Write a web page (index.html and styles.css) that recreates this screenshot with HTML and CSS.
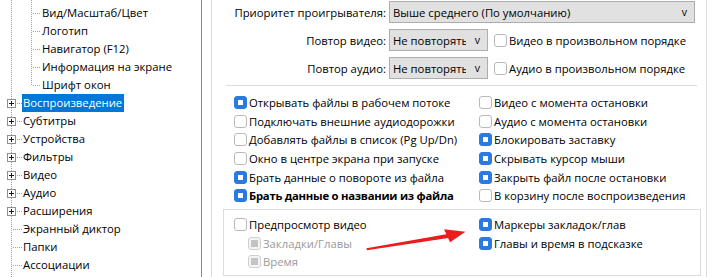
FILE: index.html
```html
<!DOCTYPE html>
<html lang="ru">
<head>
<meta charset="utf-8">
<link rel="stylesheet" href="styles.css">
</head>
<body>
<div class="root">
  <div class="tree">
    <div class="children">
      <div class="row child"><span class="lbl">Вид/Масштаб/Цвет</span></div>
      <div class="row child"><span class="lbl">Логотип</span></div>
      <div class="row child"><span class="lbl">Навигатор (F12)</span></div>
      <div class="row child"><span class="lbl">Информация на экране</span></div>
      <div class="row child"><span class="lbl">Шрифт окон</span></div>
    </div>
    <div class="row node"><span class="ind"><svg class="plus" width="9" height="9" viewBox="0 0 9 9"><rect x="0.5" y="0.5" width="8" height="8" fill="#fff" stroke="#8f8f8f"/><path d="M2 4.5H7M4.5 2V7" stroke="#1a1a1a"/></svg></span><span class="lbl sel">Воспроизведение</span></div>
    <div class="row node"><span class="ind"><svg class="plus" width="9" height="9" viewBox="0 0 9 9"><rect x="0.5" y="0.5" width="8" height="8" fill="#fff" stroke="#8f8f8f"/><path d="M2 4.5H7M4.5 2V7" stroke="#1a1a1a"/></svg></span><span class="lbl">Субтитры</span></div>
    <div class="row node"><span class="ind"><svg class="plus" width="9" height="9" viewBox="0 0 9 9"><rect x="0.5" y="0.5" width="8" height="8" fill="#fff" stroke="#8f8f8f"/><path d="M2 4.5H7M4.5 2V7" stroke="#1a1a1a"/></svg></span><span class="lbl">Устройства</span></div>
    <div class="row node"><span class="ind"><svg class="plus" width="9" height="9" viewBox="0 0 9 9"><rect x="0.5" y="0.5" width="8" height="8" fill="#fff" stroke="#8f8f8f"/><path d="M2 4.5H7M4.5 2V7" stroke="#1a1a1a"/></svg></span><span class="lbl">Фильтры</span></div>
    <div class="row node"><span class="ind"><svg class="plus" width="9" height="9" viewBox="0 0 9 9"><rect x="0.5" y="0.5" width="8" height="8" fill="#fff" stroke="#8f8f8f"/><path d="M2 4.5H7M4.5 2V7" stroke="#1a1a1a"/></svg></span><span class="lbl">Видео</span></div>
    <div class="row node"><span class="ind"><svg class="plus" width="9" height="9" viewBox="0 0 9 9"><rect x="0.5" y="0.5" width="8" height="8" fill="#fff" stroke="#8f8f8f"/><path d="M2 4.5H7M4.5 2V7" stroke="#1a1a1a"/></svg></span><span class="lbl">Аудио</span></div>
    <div class="row node"><span class="ind"><svg class="plus" width="9" height="9" viewBox="0 0 9 9"><rect x="0.5" y="0.5" width="8" height="8" fill="#fff" stroke="#8f8f8f"/><path d="M2 4.5H7M4.5 2V7" stroke="#1a1a1a"/></svg></span><span class="lbl">Расширения</span></div>
    <div class="row leaf"><span class="ind"></span><span class="lbl">Экранный диктор</span></div>
    <div class="row leaf"><span class="ind"></span><span class="lbl">Папки</span></div>
    <div class="row leaf"><span class="ind"></span><span class="lbl">Ассоциации</span></div>
  </div>

  <div class="pane">
    <div class="form">
      <div class="flabel">Приоритет проигрывателя:</div>
      <div class="dd wide"><span class="t">Выше среднего (По умолчанию)</span><span class="v">v</span></div>

      <div class="flabel">Повтор видео:</div>
      <div class="dd"><span class="t">Не повторять</span><span class="v">v</span></div>
      <div class="cb fcb"><span class="box"></span><span>Видео в произвольном порядке</span></div>

      <div class="flabel">Повтор аудио:</div>
      <div class="dd"><span class="t">Не повторять</span><span class="v">v</span></div>
      <div class="cb fcb"><span class="box"></span><span>Аудио в произвольном порядке</span></div>
    </div>

    <div class="sep"></div>

    <div class="checks">
      <div class="cb"><span class="box on"></span><span>Открывать файлы в рабочем потоке</span></div>
      <div class="cb"><span class="box"></span><span>Видео с момента остановки</span></div>
      <div class="cb"><span class="box"></span><span>Подключать внешние аудиодорожки</span></div>
      <div class="cb"><span class="box"></span><span>Аудио с момента остановки</span></div>
      <div class="cb"><span class="box"></span><span>Добавлять файлы в список (Pg Up/Dn)</span></div>
      <div class="cb"><span class="box on"></span><span>Блокировать заставку</span></div>
      <div class="cb"><span class="box"></span><span>Окно в центре экрана при запуске</span></div>
      <div class="cb"><span class="box on"></span><span>Скрывать курсор мыши</span></div>
      <div class="cb"><span class="box on"></span><span>Брать данные о повороте из файла</span></div>
      <div class="cb"><span class="box on"></span><span>Закрыть файл после остановки</span></div>
      <div class="cb bold"><span class="box on"></span><span>Брать данные о названии из файла</span></div>
      <div class="cb"><span class="box"></span><span>В корзину после воспроизведения</span></div>
    </div>

    <div class="group">
      <div class="cb"><span class="box"></span><span>Предпросмотр видео</span></div>
      <div class="cb"><span class="box on"></span><span>Маркеры закладок/глав</span></div>
      <div class="cb sub dis"><span class="box"></span><span>Закладки/Главы</span></div>
      <div class="cb"><span class="box on"></span><span>Главы и время в подсказке</span></div>
      <div class="cb sub dis"><span class="box"></span><span>Время</span></div>
    </div>
  </div>

  <svg class="arrow" width="721" height="277" viewBox="0 0 721 277">
    <polygon points="366.5,248.3 447.7,234 448.3,238 366.9,250.3" fill="#ea1c1c"/>
    <polygon points="465.5,231.7 444,229.3 450,242.3" fill="#ea1c1c"/>
  </svg>
</div>
</body>
</html>
```

FILE: styles.css
```css
* { box-sizing: border-box; }
html, body { margin: 0; padding: 0; background: #fff; }
body {
  font-family: "Open Sans", "Noto Sans", sans-serif;
  font-size: 11.3px;
  color: #000;
  width: 721px;
  height: 277px;
  overflow: hidden;
}
.root {
  position: relative;
  display: flex;
  height: 277px;
}

/* ---------- tree ---------- */
.tree {
  width: 202px;
  flex: none;
  border-right: 1px solid #828790;
  background: repeating-linear-gradient(to bottom, #a0a0a0 0 1px, transparent 1px 2px) 11px 0 / 1px 100% no-repeat;
}
.children {
  padding-top: 4px;
  background: repeating-linear-gradient(to bottom, #a0a0a0 0 1px, transparent 1px 2px) 31px 0 / 1px calc(100% - 9px) no-repeat;
}
.row {
  display: flex;
  height: 18px;
  line-height: 18px;
  white-space: nowrap;
}
.row.child {
  padding-left: 42px;
  background: repeating-linear-gradient(to right, #a0a0a0 0 1px, transparent 1px 2px) 33px 9px / 8px 1px no-repeat;
}
.row.node {
  background: repeating-linear-gradient(to right, #a0a0a0 0 1px, transparent 1px 2px) 17px 9px / 5px 1px no-repeat;
}
.row.leaf {
  background: repeating-linear-gradient(to right, #a0a0a0 0 1px, transparent 1px 2px) 13px 9px / 9px 1px no-repeat;
}
.ind {
  width: 22px;
  flex: none;
}
.plus {
  display: block;
  margin: 5px 0 0 7px;
}
.row.node .lbl, .row.leaf .lbl {
  padding: 0 2px 0 1px;
}
.lbl.sel {
  background: #0078d7;
  color: #fff;
}

/* ---------- pane ---------- */
.pane {
  margin-left: 9px;
  width: 496px;
  flex: none;
  border-left: 1px solid #dcdcdc;
  border-right: 1px solid #dcdcdc;
}
.form {
  display: grid;
  grid-template-columns: 174px 99px 1fr;
  grid-auto-rows: 22px;
  column-gap: 3px;
  row-gap: 6px;
  padding: 1px 11px 0 0;
  align-items: center;
}
.flabel {
  grid-column: 1;
  text-align: right;
  white-space: nowrap;
}
.dd {
  display: flex;
  align-items: center;
  height: 22px;
  border: 1px solid #adadad;
  background: #e1e1e1;
  padding: 0 7px 0 3px;
  white-space: nowrap;
}
.dd.wide { grid-column: 2 / 4; }
.dd .t {
  flex: 1;
  overflow: hidden;
  min-width: 0;
}
.dd .v {
  margin-left: 9px;
  font-size: 10.5px;
}
.fcb { margin-left: 3px; }

.sep {
  height: 1px;
  background: #dcdcdc;
  margin: 6px 9px 0 14px;
}
.checks {
  display: grid;
  grid-template-columns: 245px 1fr;
  grid-auto-rows: 18.7px;
  padding: 7px 0 0 22px;
}
.cb {
  display: flex;
  align-items: center;
  gap: 2px;
  white-space: nowrap;
}
.cb.bold { font-weight: 700; letter-spacing: -0.25px; }
.box {
  position: relative;
  width: 13px;
  height: 13px;
  flex: none;
  border: 1px solid #b9b9b9;
  border-radius: 3px;
  background: #fff;
}
.box.on {
  border-color: #2a7ae4;
  background: #2a7ae4;
}
.box.on::after {
  content: "";
  position: absolute;
  left: 3px;
  top: 3px;
  width: 5px;
  height: 5px;
  background: #fff;
}
.cb.sub { padding-left: 14px; }
.cb.dis { color: #9a9a9a; }
.cb.dis .box {
  border-color: #d0d0d0;
  background: #f4f4f4;
}
.cb.dis .box::after {
  content: "";
  position: absolute;
  left: 2px;
  top: 2px;
  width: 7px;
  height: 7px;
  background: #c4c4c4;
}
.group {
  margin: 4px 5px 0 11px;
  height: 67px;
  border: 1px solid #dcdcdc;
  display: grid;
  grid-template-columns: 245px 1fr;
  grid-auto-rows: 18.7px;
  padding: 5px 0 0 10px;
}

.arrow {
  position: absolute;
  left: 0;
  top: 0;
  pointer-events: none;
}
```
